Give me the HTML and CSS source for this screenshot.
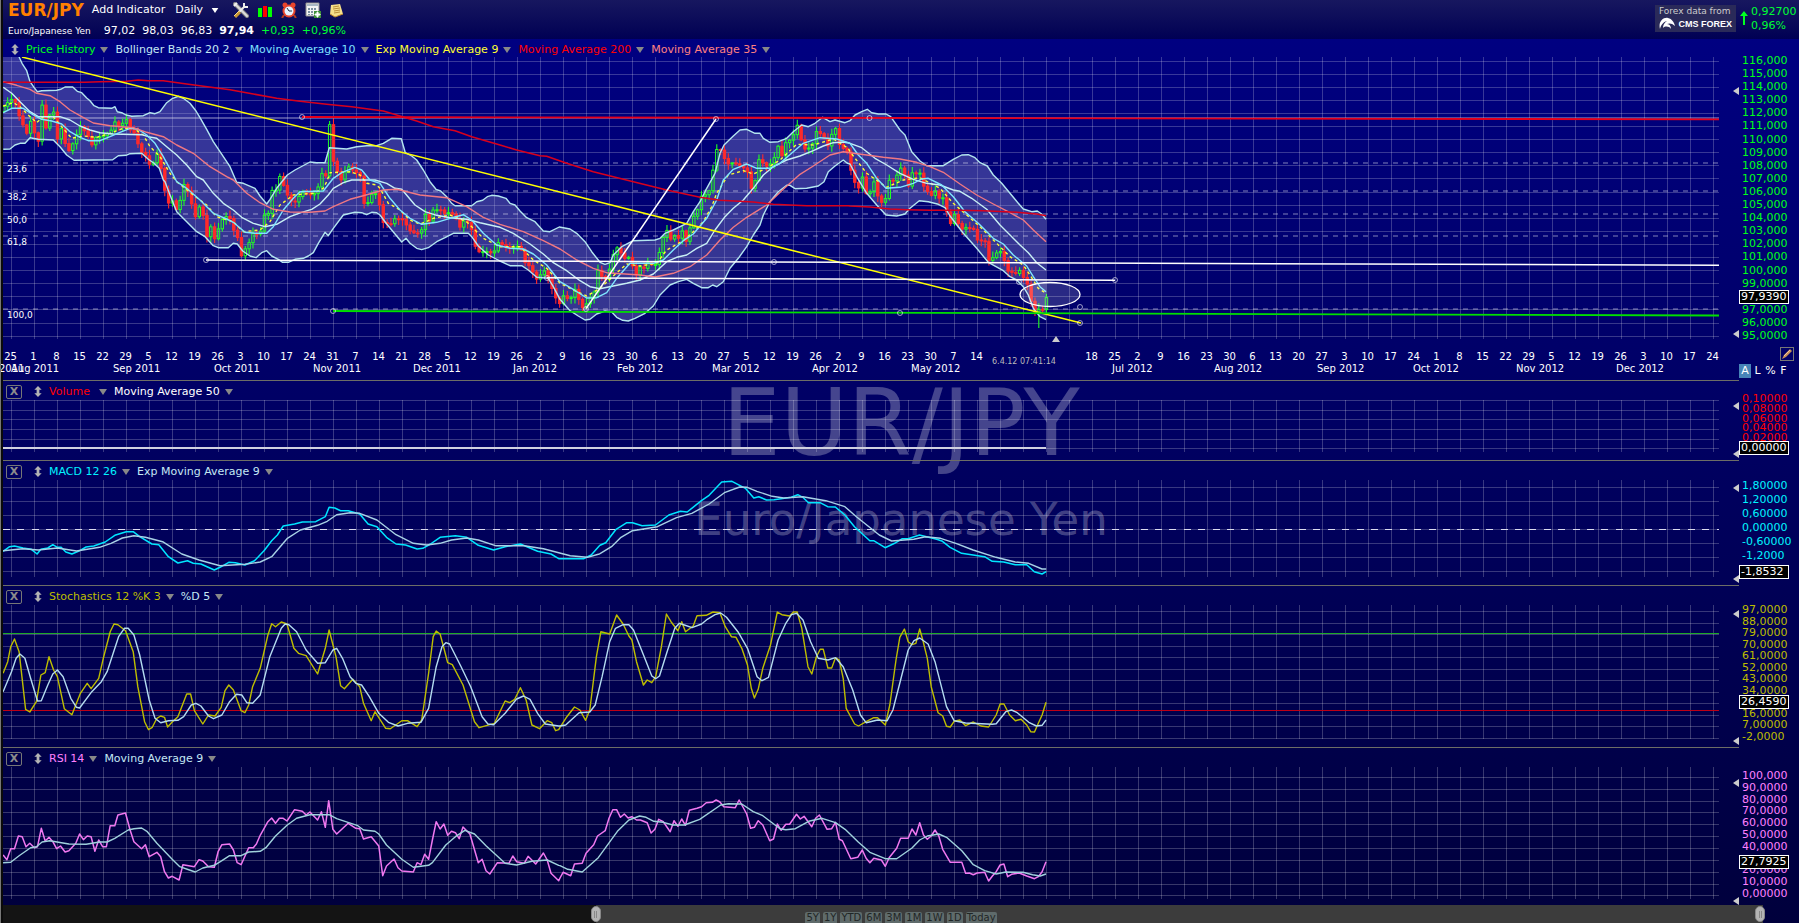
FILE: index.html
```html
<!DOCTYPE html>
<html lang="en">
<head>
    <meta charset="utf-8">
    <title>EUR/JPY Daily</title>
    <link rel="stylesheet" href="styles.css">
</head>
<body>
    <svg class="defs" width="0" height="0" aria-hidden="true">
        <symbol id="caret" viewBox="0 0 8 6"><path d="M0 0h8L4 6z" fill="currentColor"/></symbol>
        <symbol id="move" viewBox="0 0 8 12"><path d="M4 0l4 4H5.500v4H8l-4 4-4-4h2.500V4H0z" fill="currentColor"/></symbol>
        <symbol id="mark" viewBox="0 0 6 8"><path d="M6 0v8L0 4z" fill="currentColor"/></symbol>
    </svg>

    <header class="header">
        <div class="symbol-box">
            <div class="toolbar">
                <h1>EUR/JPY</h1>
                <button class="add">Add Indicator</button>
                <label class="period">
                    <select aria-label="Period">
                        <option>Daily</option>
                    </select>
                    <svg width="8" height="5" preserveAspectRatio="none"><use href="#caret"/></svg>
                </label>
                <div class="tools">
                    <button aria-label="Settings">
                        <svg width="16" height="16" viewBox="0 0 16 16">
                            <path d="M2 2l12 12" stroke="#8a8a8a" stroke-width="4" stroke-linecap="round"/>
                            <path d="M2 2l12 12" stroke="#dcdcdc" stroke-width="2" stroke-linecap="round"/>
                            <path d="M1 4l3-3" stroke="#efefef" stroke-width="2"/>
                            <path d="M6 10l5-5" stroke="#ececec" stroke-width="2"/>
                            <path d="M11 1v4h4" fill="none" stroke="#ececec" stroke-width="2"/>
                            <path d="M2 15l5-5" stroke="#c89632" stroke-width="3"/>
                            <path d="M1 14l5-5" stroke="#f5dc8a" stroke-width="1"/>
                        </svg>
                    </button>
                    <button aria-label="Chart type">
                        <svg width="16" height="16" viewBox="0 0 16 16">
                            <path d="M1 6h4v9H1z" fill="#0f0"/>
                            <path d="M6 4h4v11H6z" fill="#f00"/>
                            <path d="M11 5h4v10h-4z" fill="#0f0"/>
                        </svg>
                    </button>
                    <button aria-label="Alerts">
                        <svg width="16" height="16" viewBox="0 0 16 16">
                            <path d="M3 13l-2 3M13 13l2 3" stroke="#b43a20" stroke-width="2"/>
                            <circle cx="4" cy="3" r="2.500" fill="#e8452c"/>
                            <circle cx="12" cy="3" r="2.500" fill="#e8452c"/>
                            <circle cx="8" cy="9" r="6.500" fill="#e8452c"/>
                            <circle cx="8" cy="9" r="4.500" fill="#e6f4ff"/>
                            <path d="M6 6l2 3h3" fill="none" stroke="#234" stroke-width="1"/>
                        </svg>
                    </button>
                    <button aria-label="Add table">
                        <svg width="16" height="16" viewBox="0 0 16 16">
                            <path d="M1 1h13v13H1z" fill="#f4f4f4" stroke="#8a8a8a"/>
                            <path d="M2 2h11v2H2z" fill="#a9b7c4"/>
                            <path d="M3 6h2v2H3zM6 6h2v2H6zM9 6h2v2H9zM3 9h2v2H3zM6 9h2v2H6zM3 12h2v1H3zM6 12h2v1H6z" fill="#7b8fa0"/>
                            <path d="M9 9h7v7H9z" fill="#3f8f3a"/>
                            <path d="M12 10h1v2h2v1h-2v2h-1v-2h-2v-1h2z" fill="#fff" stroke="#fff"/>
                        </svg>
                    </button>
                    <button aria-label="Notes">
                        <svg width="16" height="16" viewBox="0 0 16 16">
                            <path d="M2 3l9-1 3 10-8 3-5-3z" fill="#f6e08a"/>
                            <path d="M1 12l5 3 8-3" fill="none" stroke="#c08a2c" stroke-width="1"/>
                            <path d="M4 5l6-1M4 7l7-1M5 9l6-1M5 11l6-1" stroke="#b98f3a" stroke-width="1"/>
                        </svg>
                    </button>
                </div>
            </div>
            <div class="quote">
                <span class="pair">Euro/Japanese Yen</span>
                <span>97,02</span>
                <span>98,03</span>
                <span>96,83</span>
                <b>97,94</b>
                <span class="up">+0,93</span>
                <span class="up">+0,96%</span>
            </div>
        </div>
        <div class="source">
            <span>Forex data from</span>
            <div class="brand">
                <svg width="16" height="13" viewBox="0 0 16 13">
                    <path d="M1 12C-1 5 4 0 9 1c4 1 6 4 7 8-3-3-6-3-8-2 3 0 4 3 4 5-2-3-6-3-8-1 0-3 1-5 4-7C4 5 2 8 1 12z" fill="#fff"/>
                </svg>
                <b>CMS FOREX</b>
            </div>
        </div>
        <svg class="arrow" width="8" height="14" viewBox="0 0 8 14"><path d="M4 0l4 5H5v9H3V5H0z" fill="#0f2"/></svg>
        <div class="change">
            <span>0,92700</span>
            <span>0,96%</span>
        </div>
    </header>

    <main class="chart">
        <div class="watermark">
            <p class="big">EUR/JPY</p>
            <p class="small">Euro/Japanese Yen</p>
        </div>

        <section class="panel price">
            <div class="area">
                <div class="legend">
                    <svg class="move" width="8" height="11"><use href="#move"/></svg>
                    <button class="c-green">Price History<svg width="8" height="6"><use href="#caret"/></svg></button>
                    <button class="c-pale">Bollinger Bands 20 2<svg width="8" height="6"><use href="#caret"/></svg></button>
                    <button class="c-sky">Moving Average 10<svg width="8" height="6"><use href="#caret"/></svg></button>
                    <button class="c-yellow">Exp Moving Average 9<svg width="8" height="6"><use href="#caret"/></svg></button>
                    <button class="c-red">Moving Average 200<svg width="8" height="6"><use href="#caret"/></svg></button>
                    <button class="c-salmon">Moving Average 35<svg width="8" height="6"><use href="#caret"/></svg></button>
                </div>
                <div class="row">
                    <div class="plot">
                        <svg id="price"></svg>
                        <ul class="fib">
                            <li style="top:106px">23,6</li>
                            <li style="top:134px">38,2</li>
                            <li style="top:157px">50,0</li>
                            <li style="top:179px">61,8</li>
                            <li style="top:252px">100,0</li>
                        </ul>
                    </div>
                    <div class="range"><svg width="6" height="8"><use href="#mark"/></svg><svg width="6" height="8"><use href="#mark"/></svg></div>
                </div>
                <div class="timeaxis">
                    <ol class="days" id="days"></ol>
                    <ol class="months">
                        <li style="width:12px">2011</li>
                        <li style="width:102px">Aug 2011</li>
                        <li style="width:101px">Sep 2011</li>
                        <li style="width:99px">Oct 2011</li>
                        <li style="width:100px">Nov 2011</li>
                        <li style="width:100px">Dec 2011</li>
                        <li style="width:104px">Jan 2012</li>
                        <li style="width:95px">Feb 2012</li>
                        <li style="width:100px">Mar 2012</li>
                        <li style="width:99px">Apr 2012</li>
                        <li style="width:201px">May 2012</li>
                        <li style="width:102px">Jul 2012</li>
                        <li style="width:103px">Aug 2012</li>
                        <li style="width:96px">Sep 2012</li>
                        <li style="width:103px">Oct 2012</li>
                        <li style="width:100px">Nov 2012</li>
                        <li style="width:70px">Dec 2012</li>
                    </ol>
                    <div class="cursor" style="left:989px">
                        <svg width="8" height="6" viewBox="0 0 8 6"><path d="M0 6h8L4 0z" fill="#ccc"/></svg>
                        <span>6.4.12 07:41:14</span>
                    </div>
                </div>
            </div>
            <div class="axis c-green">
                <ul>
                    <li>116,000</li><li>115,000</li><li>114,000</li><li>113,000</li><li>112,000</li><li>111,000</li>
                    <li>110,000</li><li>109,000</li><li>108,000</li><li>107,000</li><li>106,000</li><li>105,000</li>
                    <li>104,000</li><li>103,000</li><li>102,000</li><li>101,000</li><li>100,000</li><li>99,0000</li>
                    <li></li><li>97,0000</li><li>96,0000</li><li>95,0000</li>
                </ul>
                <output style="top:251px">97,9390</output>
                <div class="scale">
                    <button class="draw" aria-label="Draw">
                        <svg width="12" height="12" viewBox="0 0 12 12">
                            <path d="M1 11l2-4 6-6 2 2-6 6z" fill="#c89058"/>
                            <path d="M3 8l6-6" stroke="#f1c79a" stroke-width="1"/>
                        </svg>
                    </button>
                    <div class="modes"><button class="on">A</button><button>L</button><button>%</button><button>F</button></div>
                </div>
            </div>
        </section>

        <section class="panel volume">
            <div class="area">
                <div class="legend">
                    <button class="close" aria-label="Close">X</button>
                    <svg class="move" width="8" height="11"><use href="#move"/></svg>
                    <button class="c-red wide">Volume<svg width="8" height="6"><use href="#caret"/></svg></button>
                    <button class="c-white">Moving Average 50<svg width="8" height="6"><use href="#caret"/></svg></button>
                </div>
                <div class="row">
                    <div class="plot"><svg id="volume"></svg></div>
                    <div class="range"><svg width="6" height="8"><use href="#mark"/></svg><svg width="6" height="8"><use href="#mark"/></svg></div>
                </div>
            </div>
            <div class="axis c-red">
                <ul><li>0,10000</li><li>0,08000</li><li>0,06000</li><li>0,04000</li><li>0,02000</li><li></li></ul>
                <output style="top:60px">0,00000</output>
            </div>
        </section>

        <section class="panel macd">
            <div class="area">
                <div class="legend">
                    <button class="close" aria-label="Close">X</button>
                    <svg class="move" width="8" height="11"><use href="#move"/></svg>
                    <button class="c-cyan">MACD 12 26<svg width="8" height="6"><use href="#caret"/></svg></button>
                    <button class="c-pale">Exp Moving Average 9<svg width="8" height="6"><use href="#caret"/></svg></button>
                </div>
                <div class="row">
                    <div class="plot"><svg id="macd"></svg></div>
                    <div class="range"><svg width="6" height="8"><use href="#mark"/></svg><svg width="6" height="8"><use href="#mark"/></svg></div>
                </div>
            </div>
            <div class="axis c-cyan">
                <ul><li>1,80000</li><li>1,20000</li><li>0,60000</li><li>0,00000</li><li>-0,60000</li><li>-1,2000</li><li></li></ul>
                <output style="top:104px">-1,8532</output>
            </div>
        </section>

        <section class="panel stoch">
            <div class="area">
                <div class="legend">
                    <button class="close" aria-label="Close">X</button>
                    <svg class="move" width="8" height="11"><use href="#move"/></svg>
                    <button class="c-olive">Stochastics 12 %K 3<svg width="8" height="6"><use href="#caret"/></svg></button>
                    <button class="c-pale">%D 5<svg width="8" height="6"><use href="#caret"/></svg></button>
                </div>
                <div class="row">
                    <div class="plot"><svg id="stoch"></svg></div>
                    <div class="range"><svg width="6" height="8"><use href="#mark"/></svg><svg width="6" height="8"><use href="#mark"/></svg></div>
                </div>
            </div>
            <div class="axis c-olive">
                <ul>
                    <li>97,0000</li><li>88,0000</li><li>79,0000</li><li>70,0000</li><li>61,0000</li><li>52,0000</li>
                    <li>43,0000</li><li>34,0000</li><li></li><li>16,0000</li><li>7,00000</li><li>-2,0000</li>
                </ul>
                <output style="top:109px">26,4590</output>
            </div>
        </section>

        <section class="panel rsi">
            <div class="area">
                <div class="legend">
                    <button class="close" aria-label="Close">X</button>
                    <svg class="move" width="8" height="11"><use href="#move"/></svg>
                    <button class="c-pink">RSI 14<svg width="8" height="6"><use href="#caret"/></svg></button>
                    <button class="c-pale">Moving Average 9<svg width="8" height="6"><use href="#caret"/></svg></button>
                </div>
                <div class="row">
                    <div class="plot"><svg id="rsi"></svg></div>
                    <div class="range"><svg width="6" height="8"><use href="#mark"/></svg><svg width="6" height="8"><use href="#mark"/></svg></div>
                </div>
            </div>
            <div class="axis c-pink">
                <ul>
                    <li>100,000</li><li>90,0000</li><li>80,0000</li><li>70,0000</li><li>60,0000</li><li>50,0000</li>
                    <li>40,0000</li><li></li><li>20,0000</li><li>10,0000</li><li>0,00000</li>
                </ul>
                <output style="top:107px">27,7925</output>
            </div>
        </section>
    </main>

    <footer class="scroll" style="--from:33%; --to:98%">
        <input type="range" min="0" max="1000" value="329" aria-label="Range start">
        <input type="range" min="0" max="1000" value="981" aria-label="Range end">
        <nav class="spans">
            <button>5Y</button><button>1Y</button><button>YTD</button><button>6M</button><button>3M</button><button>1M</button><button>1W</button><button>1D</button><button>Today</button>
        </nav>
    </footer>
    <script src="chart.js"></script>
</body>
</html>
```

FILE: styles.css
```css
* {
    box-sizing: border-box;
}
body {
    margin: 0;
    height: 100vh;
    display: flex;
    flex-direction: column;
    border-left: 1px solid #777;
    box-shadow: inset 2px 0 #0a0a0a;
    padding-left: 2px;
    background: linear-gradient(#000084, #00003c);
    color: #fff;
    font-family: "DejaVu Sans", Verdana, sans-serif;
    font-size: 11px;
    line-height: 14px;
    overflow: hidden;
}
h1, p, ul, ol {
    margin: 0;
    padding: 0;
    list-style: none;
}
button, select {
    margin: 0;
    padding: 0;
    border: 0;
    background: none;
    color: inherit;
    font: inherit;
}
svg {
    display: block;
    flex: none;
}
.defs {
    position: absolute;
}

/* colours of the series, shared by legends and axes */
.c-green { color: #00ff19; }
.c-pale { color: #c4e8f4; }
.c-sky { color: #7fe0ff; }
.c-yellow { color: #ff3; }
.c-red { color: #f00; }
.c-salmon { color: #ff8080; }
.c-white { color: #fff; }
.c-cyan { color: #00f4ff; }
.c-olive { color: #bdbd00; }
.c-pink { color: #ff80ff; }

/* header */
.header {
    display: flex;
    flex: none;
    height: 39px;
    background: linear-gradient(#17175f, #000054);
}
.symbol-box {
    flex: 1;
    padding-left: 5px;
}
.toolbar {
    display: flex;
    align-items: center;
    height: 20px;
}
.toolbar h1 {
    color: #ff8000;
    font-size: 17px;
    line-height: 20px;
    margin-right: 8px;
}
.add {
    margin-right: 10px;
}
.period {
    display: flex;
    align-items: center;
    margin-right: 14px;
}
.period select {
    width: 36px;
    appearance: none;
}
.tools {
    display: flex;
    gap: 8px;
}
.quote {
    display: flex;
    align-items: center;
    gap: 7px;
    height: 22px;
}
.pair {
    font-size: 9px;
    margin-right: 6px;
}
.up {
    color: #0f3;
}
.source {
    margin: 5px 4px 0 0;
    width: 81px;
    height: 27px;
    padding: 0 4px;
    background: #2a2a59;
    color: #ccc;
    font-size: 9px;
    line-height: 12px;
}
.brand {
    display: flex;
    align-items: center;
    justify-content: space-between;
    color: #fff;
    font-family: "Liberation Sans", Arial, sans-serif;
}
.arrow {
    margin: 11px 3px 0 0;
}
.change {
    display: flex;
    flex-direction: column;
    width: 48px;
    padding-top: 5px;
    color: #0f3;
}

/* panels */
.chart {
    position: relative;
    flex: 1;
    min-height: 0;
    display: flex;
    flex-direction: column;
}
.watermark {
    position: absolute;
    top: 332px;
    left: 0;
    right: 0;
    text-align: center;
    color: rgba(255, 255, 255, 0.27);
}
.watermark .big {
    font-size: 92px;
    line-height: 105px;
}
.watermark .small {
    font-size: 45px;
    line-height: 52px;
    margin-top: 18px;
}
.panel {
    position: relative;
    display: flex;
}
.area {
    flex: 1;
    min-width: 0;
    border-bottom: 1px solid #6d6d66;
}
.rsi .area {
    border-bottom: 0;
}
.legend {
    display: flex;
    align-items: center;
    height: 19px;
    padding: 2px 0 0 3px;
}
.price .legend {
    height: 18px;
    padding: 3px 0 0 8px;
}
.legend button {
    display: flex;
    align-items: center;
    gap: 5px;
    margin-right: 7px;
    white-space: nowrap;
}
.legend button svg {
    color: #888;
}
.legend .wide {
    gap: 9px;
}
.legend .move {
    color: #b4b4b4;
    margin-right: 7px;
}
.legend .close {
    justify-content: center;
    width: 16px;
    height: 14px;
    margin-right: 12px;
    border: 1px solid #777;
    border-radius: 2px;
    color: #8c8c8c;
    font-weight: bold;
}
.row {
    display: flex;
}
.plot {
    position: relative;
    flex: 1;
    min-width: 0;
}
.plot > svg {
    width: 100%;
}
.price .plot > svg { height: 282px; }
.volume .plot > svg { height: 52px; }
.macd .plot > svg { height: 97px; }
.stoch .plot > svg { height: 134px; }
.rsi .plot > svg { height: 132px; }
.volume .area { height: 80px; }
.macd .area { height: 125px; }
.stoch .area { height: 162px; }
.rsi .area { height: 157px; }

.range {
    display: flex;
    flex-direction: column;
    justify-content: space-between;
    align-items: flex-end;
    width: 20px;
    color: #ccc;
}
.price .range { padding: 30px 0 1px; }
.volume .range { padding-top: 2px; height: 58px; }
.macd .range { padding-top: 4px; height: 103px; }
.stoch .range { padding-top: 5px; height: 140px; }
.rsi .range { padding-top: 12px; height: 138px; }

.fib li {
    position: absolute;
    left: 4px;
    font-size: 9px;
    line-height: 12px;
}

/* value axis: rows have no height, the labels sit centred on them */
.axis {
    width: 60px;
    padding-left: 3px;
}
.axis ul {
    display: flex;
    flex-direction: column;
    justify-content: space-between;
}
.axis li {
    height: 0;
    line-height: 0;
}
.price .axis { padding-top: 22px; }
.price .axis ul { height: 275px; }
.volume .axis { padding-top: 18px; }
.volume .axis ul { height: 49px; }
.macd .axis { padding-top: 25px; }
.macd .axis ul { height: 84px; }
.stoch .axis { padding-top: 24px; }
.stoch .axis ul { height: 127px; }
.rsi .axis { padding-top: 28px; }
.rsi .axis ul { height: 118px; }
.axis output {
    position: absolute;
    right: 10px;
    width: 50px;
    height: 14px;
    padding-left: 1px;
    border: 1px solid #fff;
    background: #000;
    color: #fff;
    line-height: 12px;
}
.scale {
    display: flex;
    flex-direction: column;
    margin: 11px 0 0 -3px;
    color: #fff;
}
.draw {
    align-self: flex-end;
    margin-right: 5px;
    border: 1px solid #777;
}
.modes {
    display: flex;
    margin-top: 3px;
}
.modes button {
    width: 13px;
}
.modes .on {
    width: 12px;
    background: #4784b8;
}

/* time axis */
.timeaxis {
    position: relative;
    height: 41px;
    padding-top: 12px;
    margin-right: 20px;
    font-size: 10px;
    line-height: 12px;
}
.days {
    display: flex;
    margin-left: -4px;
}
.days li {
    flex: none;
    width: 23px;
    text-align: center;
}
.months {
    display: flex;
    margin-left: -4px;
    overflow: hidden;
}
.months li {
    flex: none;
    white-space: nowrap;
}
.cursor {
    position: absolute;
    top: -3px;
    display: flex;
    flex-direction: column;
    align-items: flex-end;
    gap: 14px;
    padding-right: 4px;
    color: #bbb;
    font-size: 8px;
}
.cursor svg {
    margin-right: -4px;
}

/* lines of the plots */
.grid {
    stroke: rgba(255, 255, 255, 0.22);
    shape-rendering: crispEdges;
}
.line {
    fill: none;
    stroke-linejoin: round;
}
.level {
    shape-rendering: crispEdges;
}
.handle {
    fill: none;
    stroke: rgba(255, 255, 255, 0.6);
}

/* time scroller */
.scroll {
    position: relative;
    display: flex;
    flex: none;
    justify-content: center;
    align-items: flex-end;
    height: 18px;
    background: linear-gradient(to right, #141414 var(--from), #3c3c3c var(--from), #3c3c3c var(--to), transparent var(--to));
}
.scroll input {
    position: absolute;
    inset: 0;
    width: 100%;
    height: 18px;
    margin: 0;
    appearance: none;
    background: none;
    pointer-events: none;
}
.scroll input::-webkit-slider-thumb {
    appearance: none;
    width: 10px;
    height: 16px;
    border: 1px solid #888;
    border-radius: 5px;
    background: repeating-linear-gradient(to right, #b4b4b4 0 1px, #888 1px 2px) center / 5px 7px no-repeat #b4b4b4;
    pointer-events: auto;
}
.spans {
    display: flex;
    gap: 3px;
}
.spans button {
    height: 11px;
    padding: 0 1px;
    border-radius: 2px 2px 0 0;
    background: #5f6b6b;
    color: #1f2626;
    font-size: 10px;
    line-height: 11px;
}
```

FILE: chart.js
```js
var NS = 'http://www.w3.org/2000/svg';

// Every series is a list of chunks [x origin, y origin, x step, points];
// the points are steps from that origin, three to a pixel downwards.
var T = 3, W = 1568 / 600;

function read(chunks) {
    var out = [];
    chunks.forEach(function (c) {
        c[3].trim().split(/\s+/).forEach(function (p) {
            var xy = p.split(',');
            out.push([c[0] + xy[0] / c[2], c[1] + xy[1] / 3]);
        });
    });
    return out.sort(function (a, b) { return a[0] - b[0]; });
}

function add(parent, name, attrs) {
    var el = document.createElementNS(NS, name);
    for (var key in attrs) el.setAttribute(key, attrs[key]);
    parent.appendChild(el);
    return el;
}

function join(points) {
    return points.map(function (p) { return p[0].toFixed(1) + ',' + p[1].toFixed(1); }).join(' ');
}

// LEFT and the top of the plot are page coordinates
var LEFT = 3;

function plot(id, top, rows) {
    var svg = document.getElementById(id);
    var g = add(svg, 'g', { transform: 'translate(' + -LEFT + ',' + -top + ')' });
    var grid = add(g, 'g', { 'class': 'grid' });
    var right = LEFT + svg.clientWidth, bottom = top + svg.clientHeight;
    for (var x = 11.5; x < right; x += 23) {
        add(grid, 'line', { x1: x, x2: x, y1: top, y2: bottom });
    }
    rows.forEach(function (y) {
        add(grid, 'line', { x1: LEFT, x2: right, y1: y + 0.5, y2: y + 0.5 });
    });
    g.right = right;
    return g;
}

function line(g, points, color, extra) {
    var el = add(g, 'polyline', { 'class': 'line', points: join(points), stroke: color, 'stroke-width': 1.4 });
    for (var key in extra || {}) el.setAttribute(key, extra[key]);
    return el;
}

function straight(g, x1, y1, x2, y2, color, width, dash) {
    var el = add(g, 'line', { x1: x1, y1: y1, x2: x2, y2: y2, stroke: color, 'stroke-width': width });
    if (dash) el.setAttribute('stroke-dasharray', dash);
    return el;
}

function level(g, y, color, width, dash) {
    straight(g, LEFT, y, g.right, y, color, width, dash).setAttribute('class', 'level');
}

// days of the weeks; the cursor label takes the place of four of them
var days = '25 1 8 15 22 29 5 12 19 26 3 10 17 24 31 7 14 21 28 5 12 19 26 2 9 16 23 30 6 13 20 27 5 12 19 26 2 9 16 23 30 7 14 - - - - ' +
    '18 25 2 9 16 23 30 6 13 20 27 3 10 17 24 1 8 15 22 29 5 12 19 26 3 10 17 24';
days.split(' ').forEach(function (day) {
    var li = document.createElement('li');
    if (day !== '-') li.textContent = day;
    document.getElementById('days').appendChild(li);
});

/* price */
var upper = read([
    [0, 0, T, '57,170 66,190 80,212 90,245 102,262 112,275 125,272 170,271 182,268 195,261 218,261 232,274 245,278 260,294 270,302 282,317 295,323 335,325 345,320 352,335 365,338 378,345 395,349 430,347 450,338 465,341 480,335 500,308 518,295 535,289 550,295 570,310 588,333 600,353 620,388 640,425 660,455 690,500 710,547 730,550 765,565 780,588 800,612 810,598 830,565 862,525 885,510 930,486 950,488 975,488 988,443 1040,447 1070,440 1100,437 1130,437 1150,430 1175,415 1204,416 1216,458 1235,468 1250,480 1270,510 1290,545'],
    [400, 30, T, '108,478 122,483 140,500 155,520 165,527 215,527 230,515 248,511 262,500 275,496 295,498 318,505 330,520 345,525 360,543 380,563 405,575 430,603 450,605 478,591 510,597 530,610 555,635 575,665 600,697 615,703 630,698 640,675 665,650 700,632 765,630 780,625 795,610 820,600 860,580 880,545 900,515 920,475 945,430 960,370 972,345 1000,318 1020,300 1040,298 1065,310 1080,310 1090,325 1110,337 1135,335 1160,325 1180,305 1205,285 1225,290 1245,280 1268,262 1290,275 1305,270 1335,278'],
    [850, 80, T, '0,122 15,105 35,95 52,88 65,98 85,102 108,102 122,110 150,150 165,165 185,215 210,243 230,257 280,257 310,238 335,225 355,224 375,233 390,248 412,258 430,285 455,310 480,340 505,370 520,387 545,395 562,393 575,402 588,418']
]);
var lower = read([
    [0, 0, T, '10,448 30,447 45,435 60,430 75,430 90,413 115,418 160,420 180,440 200,465 222,481 338,479 355,467 378,466 390,461 425,460 445,478 462,490 478,505 490,540'],
    [0, 180, T, '495,5 510,45 530,95 560,125 590,155 615,170 640,197 655,203 685,203 700,190 712,192 728,213 750,228 768,233 785,218 800,212 815,228 835,238 848,247 865,247 885,238 910,235 925,228 940,218 955,190 975,157 985,167 1000,145 1030,105 1065,97 1085,98 1100,104 1115,97 1130,98 1140,105 1160,132 1190,168'],
    [400, 30, T, '5,636 18,625 30,640 50,655 65,659 85,653 110,635 135,623 160,610 205,610 215,620 235,648 265,675 300,693 330,707 365,707 385,720 410,742 445,745 460,770 480,808 510,842 535,858 555,870 570,868 590,852 615,843 635,846 650,862 668,871 685,873 705,865 735,850 760,828 780,795 810,765 835,755 860,748 880,760 905,773 925,773 938,765 950,770 970,755 990,715 1015,685 1040,650 1060,615 1080,585 1090,555 1110,515 1135,485 1160,466 1170,466 1185,476 1220,475 1255,468 1272,455 1285,425 1305,408 1330,390 1342,400'],
    [850, 80, T, '0,252 20,290 50,340 80,375 108,405 140,408 165,402 180,385 208,362 235,365 265,373 285,383 300,408 340,460 380,505 415,547 460,572 480,590 500,600 520,620 535,645 550,685 570,710 588,719']
]);
var middle = read([
    [0, 0, T, '10,262 35,280 60,305 90,335 115,350 180,350 210,360 240,378 270,390 300,398 340,402 425,404 445,410 470,415 500,440 530,465 560,495 590,530'],
    [0, 180, T, '610,0 640,40 670,70 700,90 725,112 760,130 795,140 830,133 870,110 905,97 935,88 960,72 985,45 1000,25 1030,8 1055,0 1125,0 1160,10 1185,25'],
    [400, 30, T, '5,478 45,525 75,545 110,556 150,563 200,568 240,578 300,592 340,610 390,642 430,672 460,698 500,722 540,752 570,770 600,776 640,768 680,760 720,750 760,732 800,695 830,682 860,675 890,655 920,640 945,600 975,560 1000,535 1030,510 1060,475 1090,435 1120,410 1160,390 1200,378 1240,362 1270,348 1300,338 1330,336'],
    [850, 80, T, '0,190 35,203 75,235 110,255 150,280 190,298 230,310 270,315 310,330 330,334 365,355 410,388 450,435 480,465 510,495 535,518 560,548 588,570']
]);
var ma10 = read([
    [0, 0, T, '10,338 35,325 70,325 100,345 125,358 155,363 185,372 210,395 240,412 265,422 300,422 330,410 360,397 390,385 415,388 440,405 465,430 490,470 520,525'],
    [0, 180, T, '530,5 560,25 600,60 640,100 680,117 700,127 735,157 765,160 800,160 820,140 850,90 880,55 900,35 970,33 1000,-5 1025,-22 1065,-38 1085,-30 1110,0 1140,10 1170,55'],
    [400, 30, T, '0,540 30,565 65,583 110,577 150,565 190,554 215,570 250,610 290,645 330,655 370,657 400,672 440,705 480,755 520,778 560,804 590,803 620,788 650,745 690,700 720,700 760,700 790,690 820,660 850,632 880,612 920,565 950,510 970,450 1000,418 1040,402 1070,415 1110,415 1140,400 1180,365 1210,340 1260,323 1310,327 1345,338'],
    [850, 80, T, '0,190 25,225 50,250 80,295 108,325 150,322 190,310 215,297 235,295 275,315 310,350 345,395 385,430 430,475 460,492 490,525 530,558 550,590 570,620 588,635']
]);
var ema9 = read([
    [0, 0, T, '10,318 40,308 60,320 90,350 110,368 130,350 160,350 185,380 215,415 250,408 290,412 330,400 370,385 400,385 430,405 450,440 480,470 510,520'],
    [0, 180, T, '530,5 580,45 620,75 650,110 700,125 730,155 780,150 810,125 840,75 880,45 940,40 970,25 980,5 990,-22 1050,-25 1080,-15 1100,10 1130,15 1140,25 1165,70'],
    [400, 30, T, '0,540 30,570 60,583 100,565 150,555 200,575 250,625 300,650 360,650 400,690 440,715 480,760 520,780 560,798 600,775 640,738 680,702 720,708 770,700 800,660 850,632 880,605 910,575 935,530 950,490 985,435 1030,422 1060,432 1100,415 1140,390 1190,343 1240,345 1300,327 1345,355'],
    [850, 80, T, '0,215 50,280 110,322 160,300 210,293 270,325 310,370 350,405 390,440 440,490 480,530 520,555 540,585 565,625 588,640']
]);
var ma200 = read([
    [0, 0, T, '10,247 255,247 300,245 380,244 415,240 445,242 490,242 560,252 650,264 690,269 760,282 830,295 900,304 980,313 1055,320 1150,333'],
    [400, 30, T, '0,258 50,273 100,290 165,302 215,320 300,345 350,360 420,377 440,379 500,400 580,425 700,455 800,480 900,502 960,511 1060,516 1120,523 1220,527 1345,527'],
    [850, 80, T, '0,378 60,381 120,387 170,389 240,391 320,391 400,392 500,397 560,402 588,407']
]);
var ma35 = read([
    [0, 0, T, '10,245 50,256 90,268 110,280 150,287 180,305 210,330 245,350 280,369 330,377 400,383 440,397 490,410 530,435 580,460 630,500 680,530'],
    [0, 180, T, '700,0 740,40 780,68 820,88 870,96 930,97 975,93 1000,80 1050,58 1090,47 1150,30 1190,28'],
    [400, 30, T, '0,480 60,495 140,503 200,530 250,562 300,583 370,605 430,632 480,657 530,690 580,715 620,728 720,735 765,741 820,730 870,710 920,675 960,630 1000,592 1040,562 1100,525 1150,478 1200,433 1240,408 1290,375 1330,365'],
    [850, 80, T, '0,218 50,225 100,232 150,237 200,247 240,260 280,277 330,312 380,345 430,372 480,398 520,420 550,450 588,485']
]);
var close = read([
    [0, 0, T, '10,320 35,300 50,310 57,345 68,370 80,400 92,365 103,400 115,425 125,305 137,385 148,345 160,330 172,420 185,385 195,430 207,450 218,430 240,380 262,405 275,435 287,410 310,408 330,400 345,365 360,378 378,355 392,395 402,400 413,430 425,455 437,465 448,492 460,490 470,460 480,490 492,560'],
    [0, 180, T, '497,40 507,70 517,60 530,92 540,65 552,15 565,35 575,70 587,110 600,75 610,110 620,175 632,140 645,178 655,145 668,115 680,110 690,118 700,150 712,168 725,228 738,200 750,185 760,160 772,165 785,150 795,95 805,98 815,30 827,35 840,-10 860,40 872,60 885,65 905,40 930,45 950,35 965,-20 978,-10 989,-165 1001,-50 1013,-25 1022,0 1035,-25 1048,-40 1060,-25 1072,-20 1084,-10 1091,68 1103,68 1113,45 1125,38 1137,70 1150,128 1172,130 1185,115'],
    [400, 30, T, '10,572 28,600 50,610 65,600 76,555 88,575 98,540 120,535 133,550 150,550 165,560 180,590 190,570 210,580 225,650 240,670 255,660 280,670 295,640 315,650 335,650 360,648 375,700 390,710 410,745 432,722 445,750 465,800 480,820 490,795 510,812 525,780 545,830 557,835 560,815 582,790 593,722 605,740 620,750 632,700 642,665 655,650 670,690 685,680 697,705 710,735 720,710 730,720 742,700 755,705 775,700 780,640 800,600 812,630 830,612 838,630 850,590 860,640 875,570 892,545 903,500 920,490 935,470 937,430 950,360 972,365 975,412 990,395 1010,400 1030,415 1045,430 1056,485 1068,440 1075,385 1090,400 1105,415 1125,380 1135,345 1145,378 1158,335 1175,330 1192,287 1203,328 1215,355 1235,350 1250,305 1270,320 1285,348 1297,305 1310,292 1320,355 1340,360'],
    [850, 80, T, '0,260 12,300 25,325 37,290 50,348 62,335 72,305 83,345 95,365 107,355 118,302 130,305 140,288 152,262 165,285 177,322 188,275 200,285 212,280 222,320 245,345 257,333 268,358 280,355 290,395 303,432 314,400 325,430 340,455 348,445 375,447 383,480 405,482 415,545 428,535 440,518 452,512 463,540 475,575 497,583 508,570 520,590 532,610 545,670 555,698 567,690 578,690 590,650']
]);

function at(points, x) {
    for (var i = 1; i < points.length; i++) {
        var a = points[i - 1], b = points[i];
        if (x <= b[0]) return a[1] + (b[1] - a[1]) * Math.max(0, x - a[0]) / (b[0] - a[0] || 1);
    }
    return points[points.length - 1][1];
}

function candles(g) {
    var last = at(close, 3.5) + 5;
    for (var i = 0; i < 273; i++) {
        var x = 3.8 + i * 23 / 6;
        var y = at(close, x) + Math.sin(i * 5.3) * 0.8;
        var up = y < last;
        var color = up ? '#2f2' : '#ff2a2a';
        var top = Math.min(y, last), height = Math.max(Math.abs(y - last), 1);
        var high = top - 1 - Math.abs(Math.sin(i * 2.1)) * 5;
        var low = top + height + 1 + Math.abs(Math.sin(i * 3.7)) * 5;
        // the long shadow of the last dip
        if (i === 270) low = 328;
        straight(g, x, high, x, up ? top : low, color, 1.1);
        if (up) straight(g, x, top + height, x, low, color, 1.1);
        add(g, 'rect', {
            x: x - 1.2, y: top, width: 2.4, height: height,
            fill: up ? 'none' : color, stroke: color, 'stroke-width': 1
        });
        last = y;
    }
}

var g = plot('price', 57, [61, 74, 87, 100, 113, 126, 139, 152, 165, 178, 192, 205, 218, 231, 244, 257, 270, 283, 296, 309, 323, 336]);
add(g, 'polygon', {
    points: join([[3, 57]].concat(upper, lower.slice().reverse())),
    fill: 'rgba(160,160,220,0.33)'
});
level(g, 118, 'rgba(255,255,255,0.3)', 2);
[163, 191, 214, 236, 309].forEach(function (y) {
    level(g, y, 'rgba(255,255,255,0.25)', 2, '5 5');
});
candles(g);
line(g, ema9, '#ff3', { 'stroke-dasharray': '3 3' });
line(g, upper, '#b4e6f0');
line(g, lower, '#b4e6f0');
line(g, middle, '#c8f0f5');
line(g, ma10, '#7fe6ff');
line(g, ma35, '#f07882');
line(g, ma200, '#d8001c', { 'stroke-width': 1.6 });

// trend lines drawn by the user, with their handles
straight(g, 22, 57, 1081, 323, '#ff0', 1.5);
straight(g, 302, 117, g.right, 119.3, '#e6001c', 1.8);
straight(g, 206, 260, g.right, 265.2, '#fff', 1.5);
straight(g, 547, 277.7, 1115, 280.2, '#fff', 1.5);
straight(g, 586, 308.7, 716, 119, '#fff', 1.5);
straight(g, 333, 311, g.right, 315.5, '#00e000', 1.8);
add(g, 'ellipse', { cx: 1050, cy: 294.5, rx: 30, ry: 12, fill: 'rgba(255,255,255,0.16)', stroke: '#fff', 'stroke-width': 1.3 });
[[302, 117], [869.5, 118], [206, 260], [774, 262], [547, 278], [1115, 280], [586, 309], [716, 119], [333, 311],
 [900, 313], [1019, 282], [1080, 307], [1080, 323]].forEach(function (h) {
    add(g, 'circle', { 'class': 'handle', cx: h[0], cy: h[1], r: 2.5 });
});

/* volume */
g = plot('volume', 400, [400, 410, 419, 429, 439, 448]);
straight(g, 3, 448, 1046, 448, '#d0d0e0', 2);

/* macd */
g = plot('macd', 480, [487, 501, 515, 529, 543, 557, 571]);
level(g, 529.5, '#dcdcf0', 1, '7 7.4');
line(g, read([
    [0, 380, W, '8,514 25,500 38,498 60,504 82,508 97,522 107,508 125,504 138,494 150,502 160,502 172,516 188,522 205,514 225,501 245,498 275,486 300,466 330,455 348,455 365,470 397,492 415,494 440,530 465,549 490,542 505,550 525,552 560,570 575,562 598,547 615,548 640,555 665,542 690,512 710,482 725,465 740,438 770,432 790,426 825,425 850,410 860,382 875,384 890,392 910,392 940,402 962,432 985,440 1010,472 1035,492 1060,495 1090,507 1105,505 1125,492 1150,472 1190,467 1220,472 1250,496 1290,510 1320,500 1360,492 1405,514 1440,522 1460,536 1525,536 1545,525 1566,498'],
    [600, 370, W, '0,526 15,518 42,478 70,458 85,458 110,467 145,465 180,435 210,424 228,426 265,392 285,376 318,336 345,334 380,355 402,384 415,380 435,390 455,389 500,382 517,374 530,382 545,398 575,398 595,410 615,411 640,435 665,470 705,512 715,512 745,533 770,520 790,506 805,506 835,495 880,508 895,514 915,532 945,550 1005,560 1025,574 1055,576 1085,584 1115,584 1135,605 1155,612 1166,605']
]), '#00e6ff', { 'stroke-width': 1.5 });
line(g, read([
    [0, 380, W, '8,512 60,506 100,510 150,504 200,513 260,502 290,490 320,474 350,467 380,472 425,485 475,522 520,540 575,557 640,553 680,546 710,530 750,476 785,450 830,436 855,424 880,404 915,398 940,400 985,420 1035,464 1080,490 1115,495 1150,490 1180,480 1220,474 1250,480 1295,497 1370,497 1420,506 1490,527 1535,532 1566,522'],
    [600, 370, W, '0,551 30,530 55,502 85,482 150,470 200,443 240,430 285,402 325,368 365,351 385,352 410,364 450,379 480,384 530,380 590,392 640,410 670,440 730,495 762,513 820,508 850,500 890,505 930,520 975,540 1035,562 1085,576 1120,580 1155,597 1166,597']
]), '#a8d2e6');

/* stochastics */
g = plot('stoch', 605, [611, 623, 634, 646, 657, 669, 680, 692, 703, 715, 726, 738]);
level(g, 633.5, '#1eaa28', 1);
level(g, 710.5, '#be0014', 1);
line(g, read([
    [0, 590, W, '8,250 20,215 28,170 38,147 50,185 67,358 78,366 95,335 107,255 118,248 128,200 140,240 150,260 168,356 188,374 210,310 228,280 238,296 258,265 270,205 288,125 298,102 308,104 328,122 348,185 360,290 378,395 388,419 398,412 410,385 420,378 430,382 438,411 450,396 465,380 488,312 498,312 508,362 530,402 545,375 562,378 578,352 588,302 598,285 610,300 630,362 640,368 650,345 660,290 680,235 700,135 710,101 720,110 735,96 750,102 768,175 780,190 800,197 830,252 850,175 860,120 878,200 890,287 900,296 922,268 940,290 950,340 970,392 980,365 1008,415 1020,416 1050,392 1065,392 1090,410 1102,390 1120,250 1132,140 1140,123 1150,132 1160,175 1170,218 1182,224 1210,285 1240,395 1252,413 1292,400 1320,333 1332,338 1345,328 1360,293 1375,330 1390,405 1410,416 1430,392 1442,398 1452,422 1460,419'],
    [560, 590, W, '0,412 18,380 38,351 52,360 67,391 78,360 95,200 107,125 130,132 148,75 165,102 180,138 188,150 200,215 218,285 228,270 240,278 250,260 265,170 278,72 290,95 308,122 318,95 328,125 348,108 358,77 382,76 400,66 418,68 432,110 448,140 460,142 475,175 490,225 500,295 508,324 518,298 530,235 550,165 560,110 568,66 580,74 600,78 610,66 620,66 632,115 648,230 658,252 670,200 680,178 688,178 700,234 710,234 720,203 730,210 740,265 748,355 770,402 780,408 800,395 820,383 830,383 850,405 862,345 878,210 888,142 900,117 910,155 920,164 930,160 940,117 948,150 960,205 970,290 988,368 1000,378 1010,409 1020,411 1030,394 1045,390 1060,407 1080,396 1100,408 1120,411 1140,375 1150,342 1160,342 1175,375 1190,392 1205,388 1220,405 1230,425 1240,426 1250,400 1260,375 1270,337']
]), '#bebe00');
line(g, read([
    [0, 590, W, '8,305 30,245 42,205 52,192 65,205 80,265 98,333 108,332 125,285 138,252 150,240 165,260 185,325 200,352 208,354 240,305 265,275 280,245 310,140 325,115 335,115 350,135 365,195 390,330 405,385 420,398 440,392 465,391 480,380 500,345 512,340 525,348 545,378 558,386 580,375 600,335 618,313 632,315 645,338 660,340 680,315 705,200 735,115 745,102 755,104 775,125 800,180 830,220 850,218 870,180 880,175 895,205 915,260 930,280 945,285 965,320 990,370 1015,397 1040,408 1065,400 1100,397 1120,355 1140,230 1155,170 1165,158 1175,162 1205,230 1230,290 1260,380 1275,402 1290,404 1320,370 1350,327 1368,318 1385,328 1405,370 1425,402 1460,408'],
    [560, 590, W, '0,408 15,405 50,368 78,366 92,345 110,260 130,155 145,115 165,104 180,104 192,120 220,200 240,258 250,266 260,258 280,185 300,115 312,100 325,105 345,113 370,102 385,88 405,74 420,69 435,82 465,125 490,175 515,260 528,272 545,262 570,150 590,100 605,74 618,70 635,90 655,155 675,205 700,210 720,203 740,230 765,300 785,375 800,398 830,390 855,392 870,360 890,270 910,180 925,152 940,144 962,162 980,215 1010,350 1030,392 1060,399 1130,403 1140,401 1165,365 1180,360 1195,368 1225,397 1245,408 1260,406 1270,390']
]), '#b4dcf0');

/* rsi */
g = plot('rsi', 767, [777, 789, 801, 812, 824, 836, 848, 860, 872, 884, 895]);
line(g, read([
    [0, 590, W, '8,795 18,809 28,776 38,776 48,738 58,740 68,770 78,760 90,773 98,770 108,715 118,753 128,742 138,755 148,776 158,768 170,786 180,782 198,760 208,732 218,749 228,738 238,740 248,784 258,750 268,770 278,770 288,707 300,707 308,675 328,669 340,720 350,755 370,776 380,764 390,800 410,787 420,800 430,845 440,864 450,859 468,870 478,824 508,830 520,809 530,813 545,830 560,832 570,785 580,764 600,762 610,780 620,818 630,824 650,773 662,773 670,762 680,736 700,695 710,684 720,700 730,685 740,685 750,693 770,659 790,664 800,675 810,666 830,690 840,665 850,712 859,632 870,718 880,732 910,700 930,715 940,716 950,747 970,740 990,768 1000,857 1010,828 1030,807 1040,833 1050,843 1080,846 1090,818 1100,824 1110,793 1120,808 1130,750 1140,695 1150,717 1160,702 1170,736 1180,724 1190,728 1200,746 1210,711 1228,732 1250,818 1260,808 1270,842 1280,852 1300,818 1330,820 1340,798 1350,815 1370,820 1380,799 1400,822 1420,789 1430,810 1440,850 1460,872'],
    [560, 590, W, '0,864 8,847 28,857 38,822 58,820 68,790 88,764 98,738 118,722 128,685 138,659 148,659 158,682 168,672 178,684 188,680 200,690 210,690 228,698 238,729 248,718 258,688 270,695 288,725 298,692 308,709 318,687 328,706 338,661 358,655 370,650 382,638 398,637 408,630 418,636 428,650 458,653 468,630 488,672 498,715 508,712 518,692 530,705 548,752 558,747 568,702 578,721 590,703 600,703 618,673 628,687 638,679 658,710 668,685 678,675 698,718 710,716 720,697 730,748 738,752 760,806 778,802 790,780 800,805 810,818 820,805 840,810 850,829 860,803 880,775 890,745 910,745 920,717 930,735 940,698 950,735 960,748 970,738 980,720 990,738 1000,778 1020,817 1050,817 1060,850 1070,849 1080,854 1090,849 1110,847 1120,873 1130,858 1140,845 1150,825 1160,822 1170,860 1180,853 1200,849 1220,858 1240,866 1250,860 1260,845 1270,815']
]), '#f078f0', { 'stroke-width': 1.5 });
line(g, read([
    [0, 590, W, '8,818 28,817 50,797 80,773 95,770 110,756 130,752 180,762 225,763 260,756 280,756 300,745 335,720 350,716 370,714 385,725 410,760 450,808 470,830 495,840 510,846 530,834 560,826 580,812 600,797 630,797 650,786 680,784 695,773 720,738 750,706 775,685 810,674 860,674 880,686 935,707 950,720 980,724 990,732 1010,765 1050,808 1080,832 1120,826 1130,818 1165,765 1190,740 1215,721 1240,732 1270,767 1320,820 1350,825 1390,814 1430,810 1460,826'],
    [560, 590, W, '0,827 20,838 58,846 100,803 150,724 180,690 208,678 225,682 245,694 270,697 295,705 325,705 365,688 420,645 440,641 475,642 505,665 530,677 575,716 590,719 615,716 650,694 685,685 720,698 745,718 780,757 810,787 850,806 880,806 920,774 940,750 960,738 990,732 1010,742 1050,782 1080,824 1110,842 1140,852 1165,846 1210,847 1235,854 1255,858 1270,852']
]), '#a0d2dc');
```
